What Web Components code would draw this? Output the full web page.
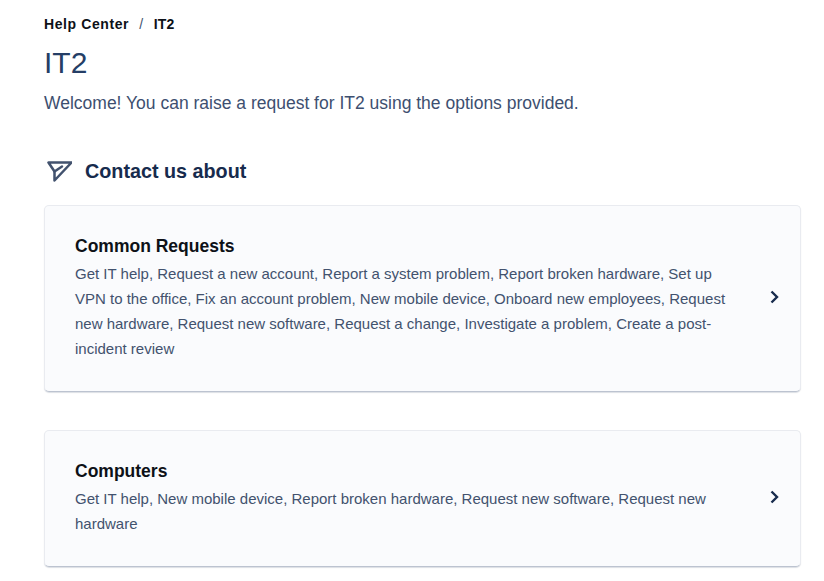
<!DOCTYPE html>
<html><head><meta charset="utf-8"><style>
html,body{margin:0;padding:0;background:#fff;overflow:hidden}
body{font-family:"Liberation Sans",Arial,sans-serif;height:581px}
</style></head><body>
<template id="t-bc"><style>
:host{display:flex;align-items:center;height:16px;font-size:14px;font-weight:700;line-height:16px;color:#0d1117;letter-spacing:.6px}
.s{color:#42526e;font-weight:400;margin:0 10px}
.e{letter-spacing:.2px}
</style><span>Help Center</span><span class="s">/</span><span class="e">IT2</span></template>
<template id="t-head"><style>
:host{display:flex;align-items:center;gap:13px;font-size:19.75px;font-weight:700;line-height:28px;color:#172b4d}
svg{display:block;width:28px;height:28px;flex:none}
</style><svg viewBox="0 0 28 28" fill="none" stroke="#42526e" stroke-width="2.5" stroke-linejoin="round" stroke-linecap="round"><path d="M4.5 5.5H27.5L10.5 23.5V14.5z"/><path d="M10.5 14.5 18 9.5"/></svg><span><slot></slot></span></template>
<template id="t-card"><style>
:host{display:flex;align-items:center;box-sizing:border-box;background:#fafbfd;border-radius:5px;border:1px solid #e9ebf0;border-bottom-color:#bcc3d0;box-shadow:0 1px 1px rgba(9,30,66,.14);padding:28px 14px 30px 30px;gap:36px}
.b{flex:1;min-width:0}
h3{margin:0;font-size:17.5px;font-weight:700;line-height:24px;color:#0d1117}
p{margin:3px 0 0;font-size:15px;line-height:25px;color:#42526e}
svg{flex:none;display:block;width:24px;height:24px;margin-bottom:2px}
</style><div class="b"><h3><slot name="title"></slot></h3><p><slot></slot></p></div><svg viewBox="0 0 24 24" fill="none" stroke="#172b4d" stroke-width="2.4"><path d="M9.5 6.5 15 12 9.5 17.5"/></svg></template>
<template id="t-page"><style>
:host{display:block;padding:16px 23px 0 44px}
h1{margin:13px 0 0;font-size:30px;font-weight:400;line-height:36px;color:#253e66}
.w{margin:10px 0 0;font-size:17.5px;line-height:24px;color:#3d4f70}
.h{margin-top:42px}
.c{display:flex;flex-direction:column;gap:38px;margin-top:20px}
</style><hc-breadcrumb></hc-breadcrumb><h1>IT2</h1><p class="w">Welcome! You can raise a request for IT2 using the options provided.</p><hc-heading class="h">Contact us about</hc-heading><div class="c"><slot></slot></div></template>
<hc-page>
<hc-card><span slot="title">Common Requests</span>Get IT help, Request a new account, Report a system problem, Report broken hardware, Set up VPN to the office, Fix an account problem, New mobile device, Onboard new employees, Request new hardware, Request new software, Request a change, Investigate a problem, Create a post-incident review</hc-card>
<hc-card><span slot="title">Computers</span>Get IT help, New mobile device, Report broken hardware, Request new software, Request new hardware</hc-card>
</hc-page>
<script>
function def(n,t){customElements.define(n,class extends HTMLElement{constructor(){super();this.attachShadow({mode:'open'}).appendChild(document.getElementById(t).content.cloneNode(true))}})}
def('hc-breadcrumb','t-bc');def('hc-heading','t-head');def('hc-card','t-card');def('hc-page','t-page');
</script>
</body></html>
